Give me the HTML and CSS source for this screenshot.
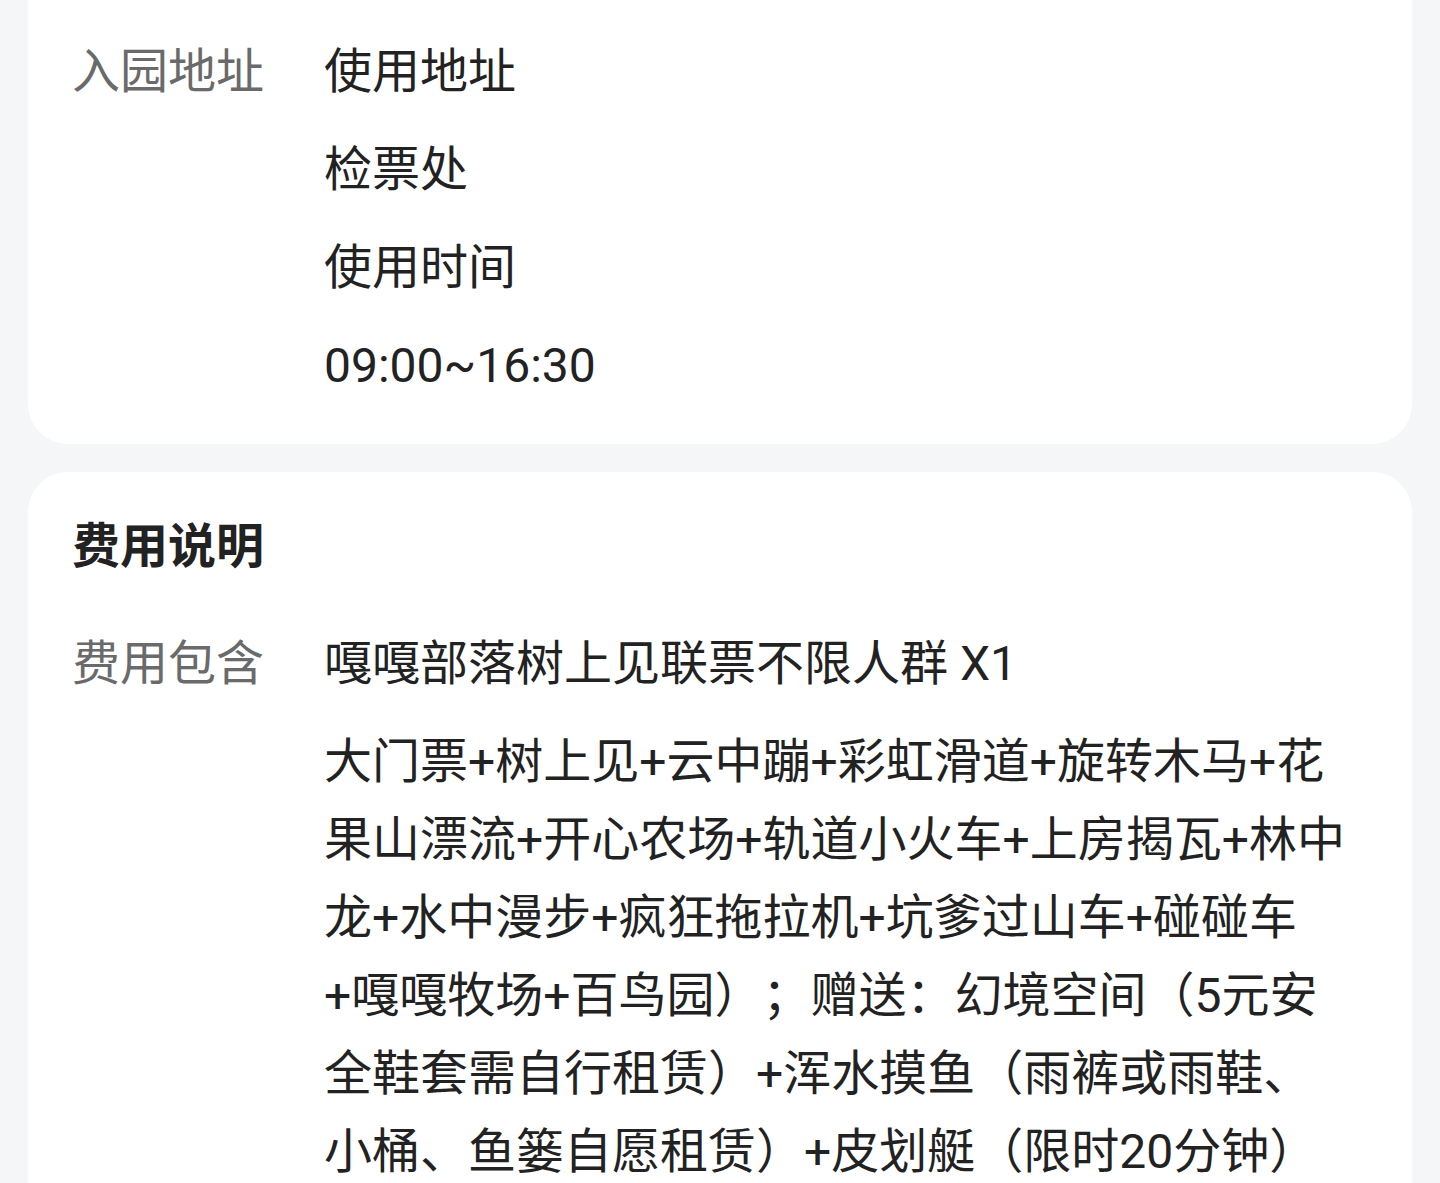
FILE: index.html
```html
<!DOCTYPE html>
<html lang="zh-CN">
<head>
<meta charset="utf-8">
<title>费用说明</title>
<link rel="stylesheet" href="styles.css">
</head>
<body>
<div class="page">
  <section class="card card-top">
    <div class="row">
      <div class="label">入园地址</div>
      <div class="values">
        <p class="value">使用地址</p>
        <p class="value">检票处</p>
        <p class="value">使用时间</p>
        <p class="value">09:00~16:30</p>
      </div>
    </div>
  </section>
  <section class="card">
    <h2 class="title">费用说明</h2>
    <div class="row">
      <div class="label">费用包含</div>
      <div class="values">
        <p class="value">嘎嘎部落树上见联票不限人群 X1</p>
        <p class="value">大门票+树上见+云中蹦+彩虹滑道+旋转木马+花<br>果山漂流+开心农场+轨道小火车+上房揭瓦+林中<br>龙+水中漫步+疯狂拖拉机+坑爹过山车+碰碰车<br>+嘎嘎牧场+百鸟园）；赠送：幻境空间（5元安<br>全鞋套需自行租赁）+浑水摸鱼（雨裤或雨鞋、<br>小桶、鱼篓自愿租赁）+皮划艇（限时20分钟）</p>
      </div>
    </div>
  </section>
</div>
</body>
</html>
```

FILE: styles.css
```css
html, body {
  margin: 0;
  padding: 0;
  background: #f5f6f8;
}
body {
  font-family: Roboto, "Noto Sans CJK SC", sans-serif;
  color: #222222;
  height: 1183px;
  overflow: hidden;
  text-spacing-trim: space-all;
}
.page {
  padding: 0 28px;
  display: flex;
  flex-direction: column;
  gap: 28px;
}
.card {
  background: #ffffff;
  border-radius: 40px;
  padding: 36px 44px 40px 44px;
}
.card-top {
  border-radius: 0 0 40px 40px;
  padding-top: 33px;
  padding-bottom: 39px;
}
.title {
  margin: 0 0 39px 0;
  font-size: 48px;
  line-height: 78px;
  font-weight: 700;
  color: #222222;
}
.row {
  display: flex;
}
.label {
  width: 252px;
  flex: none;
  font-size: 48px;
  line-height: 78px;
  color: #6a6a6a;
}
.values {
  flex: 1;
  display: flex;
  flex-direction: column;
  gap: 20px;
}
.value {
  margin: 0;
  font-size: 48px;
  line-height: 78px;
  color: #222222;
  white-space: nowrap;
}
```
